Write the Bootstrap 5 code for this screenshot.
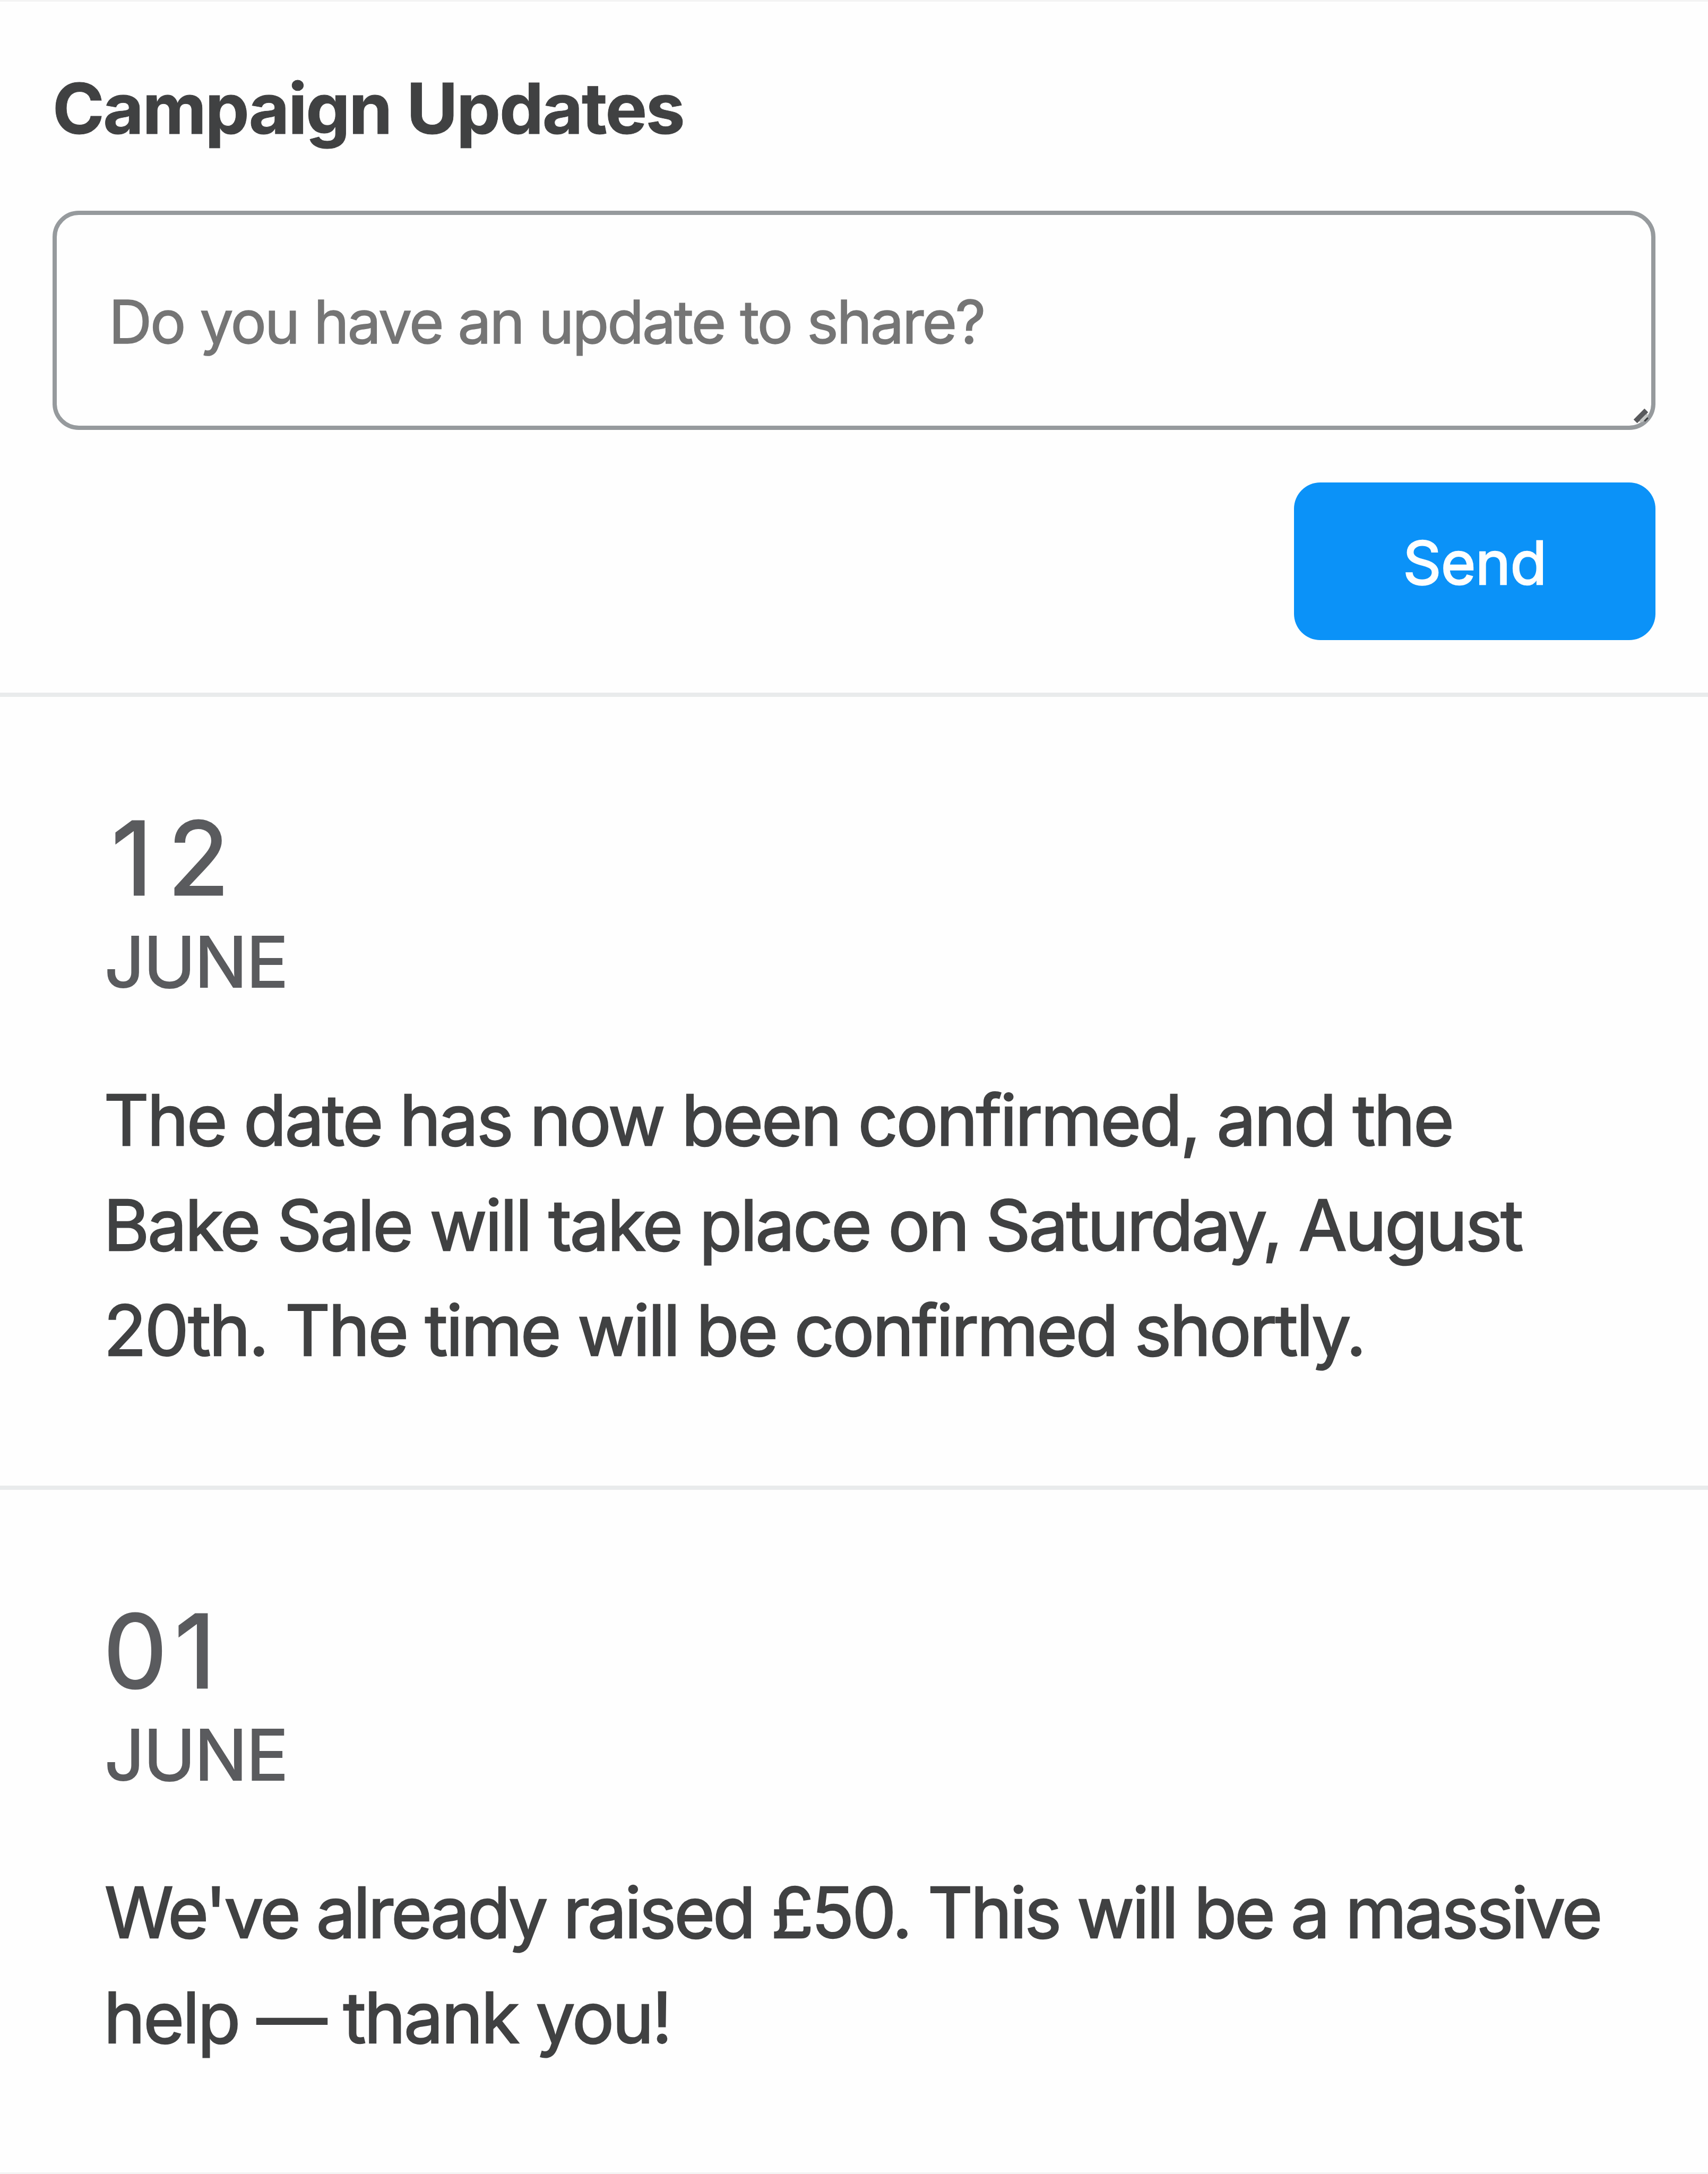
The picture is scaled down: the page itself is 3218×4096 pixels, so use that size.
<!DOCTYPE html>
<html lang="en">
<head>
<meta charset="utf-8">
<meta name="viewport" content="width=device-width, initial-scale=1">
<title>Campaign Updates</title>
<link rel="stylesheet" href="https://cdn.jsdelivr.net/npm/bootstrap@5.3.0/dist/css/bootstrap.min.css">
<style>
  body {
    font-family: Inter, "Liberation Sans", sans-serif;
    font-size: 132px;
    line-height: 198px;
    color: #404142;
    background: #fefefe;
    overflow: hidden;
  }
  .updates-panel {
    height: 4096px;
    border-top: 3px solid #f3f3f3;
    border-bottom: 3px solid #f3f3f3;
  }
  .composer {
    height: 1310px;
    padding: 102px 99px 0;
    border-bottom: 8px solid #e9ebec;
  }
  .composer h2 {
    font-size: 132px;
    line-height: 198px;
    letter-spacing: -2.4px;
    margin-bottom: 94px;
    -webkit-text-stroke: 1px #404142;
  }
  .update-input.form-control {
    height: 413px;
    padding: 116px 98px 0;
    border: 8px solid #969a9d;
    border-radius: 49.5px;
    background: #fefefe;
    font-size: 112.5px;
    line-height: 170px;
    letter-spacing: -3.1px;
    word-spacing: .5px;
    resize: none;
    overflow: hidden;
    -webkit-text-stroke: 1.6px #757575;
  }
  .update-input::placeholder { color: #757575; }
  .grip { right: 11px; bottom: -1px; width: 55px; height: 55px; }
  .send-btn.btn {
    width: 681px;
    height: 297px;
    margin-top: 99px;
    padding: 4px 0 0;
    border: 0;
    border-radius: 49.5px;
    background: #0b92f8;
    color: #fefefe;
    font-size: 112.5px;
    line-height: 170px;
    letter-spacing: -.6px;
    -webkit-text-stroke: 2.6px #fefefe;
  }
  .update-item {
    height: 1493.5px;
    padding: 208px 99px 0 198px;
    border-bottom: 8px solid #e9ebec;
  }
  .update-item:last-child { height: 1286px; border-bottom: 0; }
  .update-date { color: #5a5b5e; margin-bottom: 99.5px; }
  .day-num { font-size: 191px; line-height: 192px; -webkit-text-stroke: 3px #5a5b5e; }
  .day-12 { letter-spacing: 28px; text-indent: 12px; }
  .day-01 { letter-spacing: 14px; text-indent: -3.5px; }
  .month-name { letter-spacing: -2px; text-indent: -1px; -webkit-text-stroke: 2.2px #5a5b5e; }
  .update-copy { -webkit-text-stroke: 2.4px #404142; white-space: nowrap; }
  .update-copy span { letter-spacing: -3.45px; text-indent: -2.5px; }
  .update-copy .ln-2 { text-indent: -3px; }
  .update-copy .ln-3 { letter-spacing: -3.45px; text-indent: -2.5px; }
  .update-copy .ln-4 { letter-spacing: -4.15px; text-indent: -1px; }
  .update-copy .ln-5 { letter-spacing: -3.3px; text-indent: -2.5px; }
</style>
</head>
<body>
<main class="updates-panel d-flex flex-column">
  <section class="composer d-flex flex-column flex-shrink-0">
    <h2 class="fw-bold mt-0">Campaign Updates</h2>
    <div class="position-relative d-flex">
      <textarea class="form-control update-input" placeholder="Do you have an update to share?" aria-label="Update"></textarea>
      <svg class="grip position-absolute" viewBox="3330 825 60 60" aria-hidden="true">
        <path d="M3365 864 L3381 848 L3387.5 854 L3372 869Z" fill="#c4c6c5"/>
        <path d="M3357 862.5 L3379.5 840 L3387 847.5 L3364.5 870Z" fill="#58595c"/>
        <path d="M3370 864 L3382 852 L3386 857 L3375 868Z" fill="#c4c6c5"/>
        <path d="M3379.5 866 L3386.5 859" stroke="#3c3d3f" stroke-width="3.4"/>
      </svg>
    </div>
    <button type="button" class="btn btn-primary send-btn align-self-end">Send</button>
  </section>
  <article class="update-item flex-shrink-0">
    <div class="update-date">
      <div class="day-num day-12">12</div>
      <div class="month-name text-uppercase">June</div>
    </div>
    <p class="update-copy mb-0">
      <span class="d-block">The date has now been confirmed, and the</span>
      <span class="d-block ln-2">Bake Sale will take place on Saturday, August</span>
      <span class="d-block ln-3">20th. The time will be confirmed shortly.</span>
    </p>
  </article>
  <article class="update-item flex-shrink-0">
    <div class="update-date">
      <div class="day-num day-01">01</div>
      <div class="month-name text-uppercase">June</div>
    </div>
    <p class="update-copy mb-0">
      <span class="d-block ln-4">We've already raised £50. This will be a massive</span>
      <span class="d-block ln-5">help — thank you!</span>
    </p>
  </article>
</main>
<script src="https://cdn.jsdelivr.net/npm/bootstrap@5.3.0/dist/js/bootstrap.bundle.min.js"></script>
</body>
</html>
